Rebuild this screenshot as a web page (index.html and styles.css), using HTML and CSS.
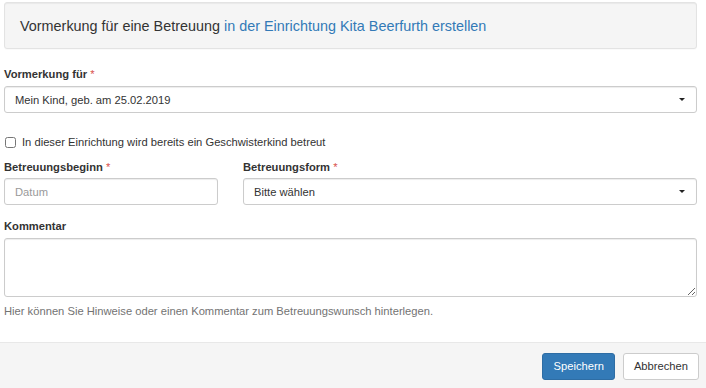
FILE: index.html
```html
<!DOCTYPE html>
<html lang="de">
<head>
<meta charset="utf-8">
<title>Vormerkung</title>
<link rel="stylesheet" href="styles.css">
</head>
<body>
<div class="content">
  <div class="well">
    <h4 class="well-title">Vormerkung für eine Betreuung <a href="#" class="link">in der Einrichtung Kita Beerfurth erstellen</a></h4>
  </div>

  <div class="form-group">
    <label class="control-label">Vormerkung für <span class="req">*</span></label>
    <div class="select">
      <span class="select-text">Mein Kind, geb. am 25.02.2019</span>
      <span class="caret"></span>
    </div>
  </div>

  <label class="checkbox">
    <input type="checkbox" class="cb">
    <span>In dieser Einrichtung wird bereits ein Geschwisterkind betreut</span>
  </label>

  <div class="row">
    <div class="col col-4">
      <label class="control-label row-label">Betreuungsbeginn <span class="req">*</span></label>
      <input class="form-control" type="text" placeholder="Datum">
    </div>
    <div class="col col-8">
      <label class="control-label row-label">Betreuungsform <span class="req">*</span></label>
      <div class="select">
        <span class="select-text">Bitte wählen</span>
        <span class="caret"></span>
      </div>
    </div>
  </div>

  <div class="form-group comment">
    <label class="control-label">Kommentar</label>
    <textarea class="textarea"></textarea>
    <p class="help">Hier können Sie Hinweise oder einen Kommentar zum Betreuungswunsch hinterlegen.</p>
  </div>
</div>
<div class="footer">
  <button class="btn btn-primary">Speichern</button>
  <button class="btn btn-default">Abbrechen</button>
</div>
</body>
</html>
```

FILE: styles.css
```css
* { box-sizing: border-box; }
html, body { margin: 0; padding: 0; }
body {
  font-family: "Liberation Sans", Arial, sans-serif;
  font-size: 11.2px;
  color: #333;
  background: #fff;
  width: 706px;
  height: 388px;
  overflow: hidden;
}
.content {
  padding: 2px 9px 0 4px;
  height: 342px;
}
.well {
  height: 47px;
  background: #f5f5f5;
  border: 1px solid #e3e3e3;
  border-radius: 3px;
  box-shadow: inset 0 1px 1px rgba(0,0,0,0.05), 0 1px 0 rgba(0,0,0,0.02);
  display: flex;
  align-items: center;
  padding-left: 15px;
}
.well-title {
  margin: 0;
  font-size: 14.4px;
  font-weight: normal;
  color: #333;
}
.link { color: #337ab7; text-decoration: none; }
.form-group { margin-top: 18px; }
.control-label {
  display: block;
  font-weight: bold;
  font-size: 11.2px;
  line-height: 14px;
  margin-bottom: 5px;
  color: #333;
}
.row-label { margin-bottom: 4px; }
.req { color: #d9534f; font-weight: normal; }
.select {
  height: 27px;
  border: 1px solid #ccc;
  border-radius: 3px;
  box-shadow: inset 0 1px 1px rgba(0,0,0,0.075);
  display: flex;
  align-items: center;
  justify-content: space-between;
  padding: 0 11px 0 10px;
  background: #fff;
}
.select-text { font-size: 11.2px; color: #333; }
.caret {
  width: 0; height: 0;
  border-left: 3.5px solid transparent;
  border-right: 3.5px solid transparent;
  border-top: 3.5px solid #222;
}
.checkbox {
  display: flex;
  align-items: center;
  margin-top: 22px;
  font-size: 11.2px;
  line-height: 14px;
  gap: 6px;
}
.cb {
  margin: 0 0 0 1px;
  width: 11px;
  height: 11px;
}
.row {
  display: flex;
  gap: 25px;
  margin-top: 11px;
}
.col-4 { width: 214px; flex: none; }
.col-8 { flex: 1; }
.form-control {
  display: block;
  width: 100%;
  height: 27px;
  border: 1px solid #ccc;
  border-radius: 3px;
  box-shadow: inset 0 1px 1px rgba(0,0,0,0.075);
  padding: 0 10px;
  font-family: inherit;
  font-size: 11.2px;
  color: #333;
  outline: none;
}
.form-control::placeholder { color: #999; }
.comment { margin-top: 14px; }
.textarea {
  display: block;
  width: 100%;
  height: 59px;
  border: 1px solid #ccc;
  border-radius: 3px;
  box-shadow: inset 0 1px 1px rgba(0,0,0,0.075);
  resize: vertical;
  font-family: inherit;
  margin: 0;
}
.help {
  margin: 7px 0 0;
  font-size: 11.2px;
  line-height: 14px;
  color: #737373;
}
.footer {
  height: 46px;
  background: #f5f5f5;
  border-top: 1px solid #e8e8e8;
  display: flex;
  justify-content: flex-end;
  align-items: center;
  gap: 8px;
  padding: 1px 7px 0 0;
}
.btn {
  height: 27px;
  font-family: inherit;
  font-size: 11.2px;
  border-radius: 3px;
  padding: 0 10px;
  cursor: pointer;
}
.btn-primary {
  background: #337ab7;
  border: 1px solid #2e6da4;
  color: #fff;
}
.btn-default {
  background: #fff;
  border: 1px solid #ccc;
  color: #333;
}
```
